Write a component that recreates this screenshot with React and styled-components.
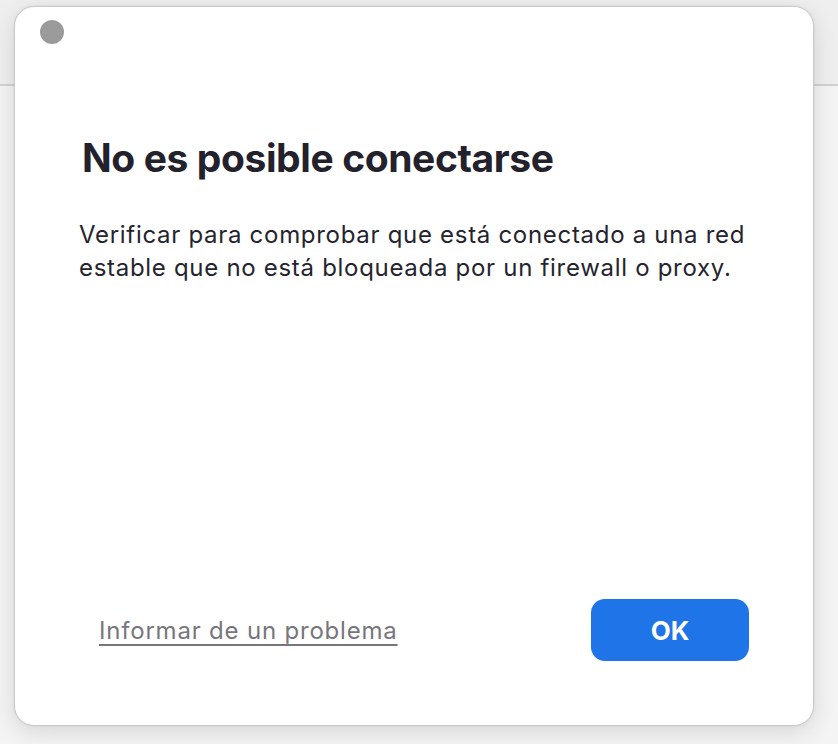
import React from 'react'
import styled, { createGlobalStyle } from 'styled-components'

const GlobalStyle = createGlobalStyle`
  html, body {
    margin: 0;
    padding: 0;
    background: #f3f3f3;
  }
  body {
    font-family: Inter, "Noto Sans", "Liberation Sans", sans-serif;
    -webkit-font-smoothing: antialiased;
  }
`;

const Backdrop = styled.div`
  position: relative;
  width: 838px;
  height: 744px;
  overflow: hidden;
  background: #f4f4f4;
`;

const BackToolbar = styled.div`
  height: 84px;
  background: #efefef;
  border-bottom: 2px solid #d2d2d2;
`;

const Dialog = styled.div`
  position: absolute;
  left: 14px;
  top: 6px;
  width: 800px;
  height: 720px;
  box-sizing: border-box;
  background: #ffffff;
  border-radius: 20px;
  border: 1px solid #c9c9c9;
  box-shadow: 0 6px 24px rgba(0, 0, 0, 0.12), 0 0 3px rgba(0, 0, 0, 0.08);
  display: flex;
  flex-direction: column;
  padding: 13px 64px 64px 64px;
`;

const WindowDot = styled.span`
  display: block;
  width: 24px;
  height: 24px;
  border-radius: 50%;
  background: #9b9b9b;
  margin-left: -39px;
`;

const Title = styled.h1`
  margin: 91px 0 0 3px;
  font-size: 39px;
  line-height: 46px;
  font-weight: 700;
  letter-spacing: -0.4px;
  color: #22212c;
`;

const Message = styled.p`
  margin: 37px 0 0 0;
  font-size: 24px;
  line-height: 33px;
  font-weight: 400;
  letter-spacing: 0.7px;
  color: #25242e;
`;

const Footer = styled.div`
  margin-top: auto;
  display: flex;
  align-items: center;
  justify-content: space-between;
  padding-left: 20px;
`;

const ReportLink = styled.a`
  font-size: 24px;
  letter-spacing: 0.8px;
  color: #77767c;
  text-decoration: underline;
  text-underline-offset: 5px;
  text-decoration-thickness: 2px;
  cursor: pointer;
`;

const OkButton = styled.button`
  width: 158px;
  height: 62px;
  border: none;
  border-radius: 14px;
  background: #1f74e8;
  color: #ffffff;
  font-family: inherit;
  font-size: 26px;
  font-weight: 700;
  cursor: pointer;
`;

export default function App() {
  return (
    <Backdrop>
      <GlobalStyle />
      <BackToolbar />
      <Dialog>
        <WindowDot />
        <Title>No es posible conectarse</Title>
        <Message>
          Verificar para comprobar que está conectado a una red
          <br />
          estable que no está bloqueada por un firewall o proxy.
        </Message>
        <Footer>
          <ReportLink>Informar de un problema</ReportLink>
          <OkButton>OK</OkButton>
        </Footer>
      </Dialog>
    </Backdrop>
  )
}
